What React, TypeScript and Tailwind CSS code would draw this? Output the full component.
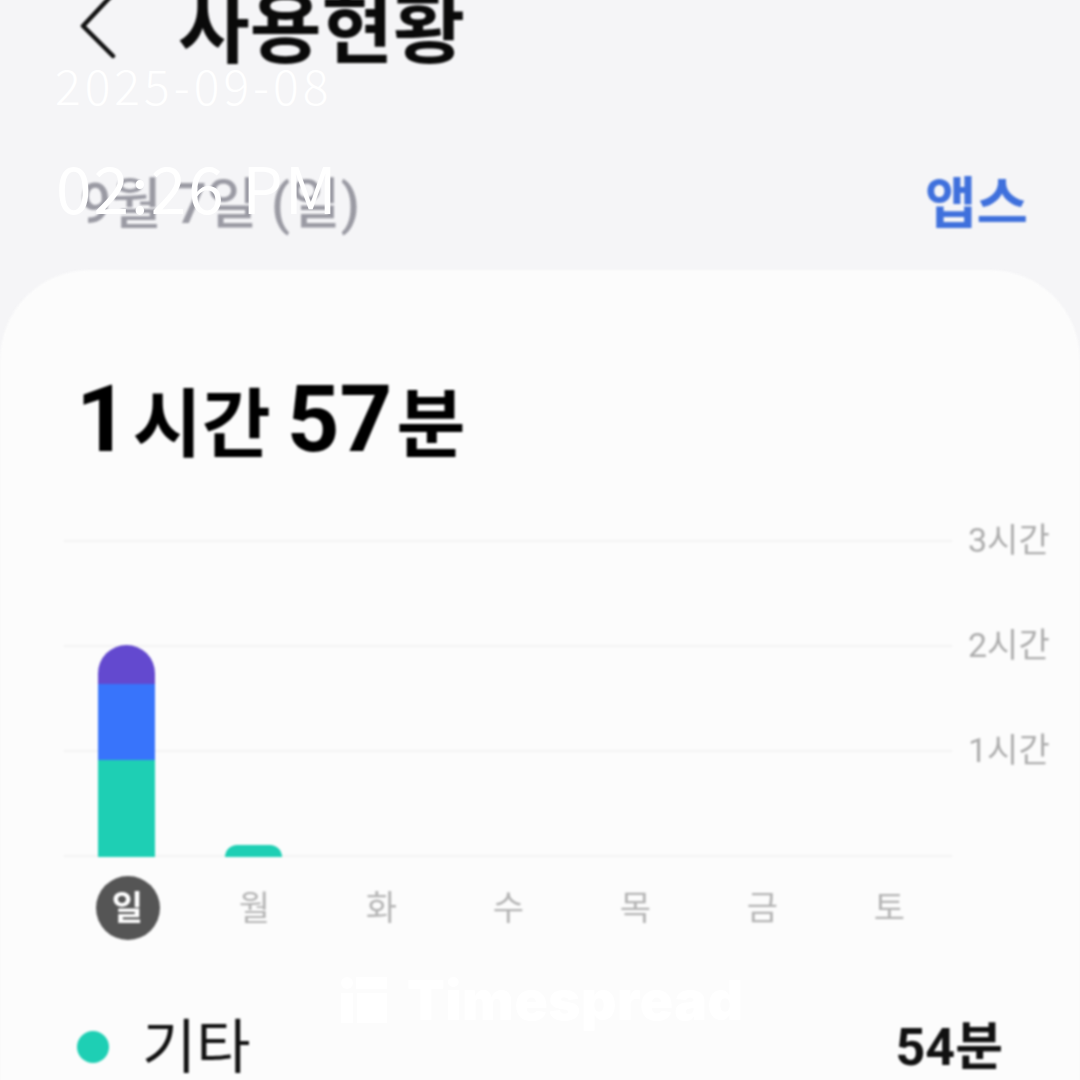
const days = ["일", "월", "화", "수", "목", "금", "토"];
const cjk = "font-['Roboto','Noto_Sans_CJK_KR',sans-serif]";

function GridRow({ label }: { label?: string }) {
  return (
    <div className="flex h-[105px] items-start">
      <div className="h-[2px] w-[888px] bg-[#f3f3f3]" />
      {label && (
        <span className="-mt-[22px] ml-4 text-[34px] leading-[44px] text-[#adadad]">{label}</span>
      )}
    </div>
  );
}

export default function App() {
  return (
    <div className={`relative h-[1080px] w-[1080px] overflow-hidden bg-[#f5f5f7] ${cjk}`}>
      <div className="blur-[0.8px]">
        {/* Header */}
        <div className="flex h-[58px] items-center pl-[80px]">
          <svg width="40" height="62" viewBox="0 0 40 62" fill="none" className="-mt-[2px] shrink-0">
            <path d="M33 -3 L3 29 L33 59" stroke="#111" strokeWidth="4.5" strokeLinecap="round" strokeLinejoin="round" />
          </svg>
          <h1 className="mt-[4px] ml-[58px] text-[78px] leading-[90px] font-bold text-[#0a0a0a]">사용현황</h1>
        </div>

        {/* Date row */}
        <div className="mt-[114px] flex items-center justify-between pr-[52px] pl-[80px]">
          <span className="text-[55px] leading-[64px] font-medium text-[#9a9aa3]">9월 7일 (일)</span>
          <span className="text-[56px] leading-[64px] font-bold text-[#3f70dc]">앱스</span>
        </div>

        {/* Card */}
        <div className="mt-[34px] h-[900px] rounded-t-[90px] bg-[#fcfcfc] pt-[100px]">
          <div className="flex items-baseline pl-[76px] leading-[100px] font-bold text-black">
            <span className="text-[92px]">1</span>
            <span className="ml-1 text-[75px]">시간</span>
            <span className="ml-4 text-[92px]">57</span>
            <span className="ml-1 text-[75px]">분</span>
          </div>

          {/* Chart */}
          <div className="relative mt-[65px] ml-[64px] h-[318px]">
            <GridRow label="3시간" />
            <GridRow label="2시간" />
            <GridRow label="1시간" />
            <GridRow />
            <div className="absolute top-0 -left-px grid h-[317px] w-[889px] grid-cols-7 items-end justify-items-center">
              <div className="flex w-[57px] flex-col">
                <div className="h-[39px] rounded-t-[29px] bg-[#6349cf]" />
                <div className="h-[76px] bg-[#3874fb]" />
                <div className="h-[97px] bg-[#1ecfb4]" />
              </div>
              <div className="h-[12px] w-[57px] rounded-t-[12px] bg-[#1ecfb4]" />
            </div>
          </div>

          {/* Days */}
          <div className="mt-[18px] ml-[64px] grid w-[889px] grid-cols-7 justify-items-center">
            {days.map((d, i) => (
              <div
                key={d}
                className={`flex h-[64px] w-[64px] items-center justify-center rounded-full text-[34px] ${
                  i === 0 ? "bg-[#555555] font-bold text-white" : "text-[#b4b4b4]"
                }`}
              >
                {d}
              </div>
            ))}
          </div>

          {/* Legend row */}
          <div className="mt-[70px] flex items-center justify-between pr-[77px] pl-[77px]">
            <div className="flex items-center gap-[33px]">
              <span className="h-[32px] w-[32px] rounded-full bg-[#1ecfb4]" />
              <span className="mt-[3px] text-[59px] leading-[70px] text-[#111]">기타</span>
            </div>
            <span className="mt-[2px] text-[52px] leading-[70px] font-bold text-[#111]">54분</span>
          </div>
        </div>
      </div>

      {/* Timestamp overlay */}
      <div className="absolute top-[54px] left-[55px] text-[48px] leading-[60px] font-light tracking-[4px] text-white font-['Noto_Sans_CJK_KR','Noto_Sans',sans-serif]">
        2025-09-08
      </div>
      <div className="absolute top-[143px] left-[56px] text-[64px] leading-[86px] font-normal tracking-[2px] text-white font-['Noto_Sans_CJK_KR','Noto_Sans',sans-serif]">
        02:26 PM
      </div>

      {/* Watermark */}
      <div className="absolute top-[970px] left-[341px] flex items-center gap-[20px] text-white">
        <svg width="46" height="46" viewBox="0 0 46 46" fill="white" className="shrink-0">
          <circle cx="6" cy="6" r="6" />
          <rect x="15" y="0" width="31" height="12" />
          <rect x="0" y="16" width="12" height="30" />
          <rect x="16" y="16" width="30" height="30" />
        </svg>
        <span className="text-[55px] leading-[60px] font-black tracking-[0.5px] font-['Inter',sans-serif]">Timespread</span>
      </div>
    </div>
  );
}
